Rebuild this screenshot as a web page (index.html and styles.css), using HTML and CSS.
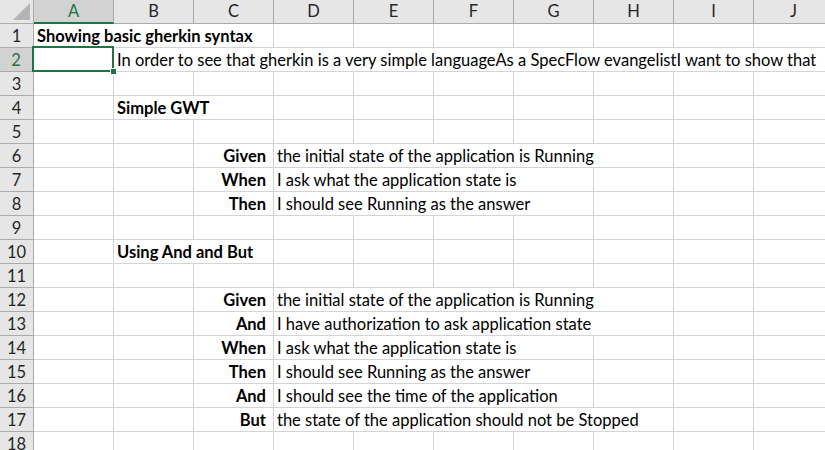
FILE: index.html
```html
<!DOCTYPE html>
<html lang="en">
<head>
  <meta charset="UTF-8">
  <title>Showing basic gherkin syntax</title>
  <link rel="stylesheet" href="styles.css">
</head>
<body>
  <div class="sheet">
    <!-- column headers -->
    <div class="corner"><span class="tri"></span></div>
    <div class="colhead active">A</div>
    <div class="colhead">B</div>
    <div class="colhead">C</div>
    <div class="colhead">D</div>
    <div class="colhead">E</div>
    <div class="colhead">F</div>
    <div class="colhead">G</div>
    <div class="colhead">H</div>
    <div class="colhead">I</div>
    <div class="colhead">J</div>

    <div class="rowhead">1</div>
    <div class="cell span3 bold">Showing basic gherkin syntax</div>
    <div class="cell"></div><div class="cell"></div><div class="cell"></div><div class="cell"></div><div class="cell"></div><div class="cell"></div><div class="cell"></div>

    <div class="rowhead active">2</div>
    <div class="cell selected"><span class="handle"></span></div>
    <div class="cell span9">In order to see that gherkin is a very simple languageAs a SpecFlow evangelistI want to show that</div>

    <div class="rowhead">3</div>
    <div class="cell"></div><div class="cell"></div><div class="cell"></div><div class="cell"></div><div class="cell"></div><div class="cell"></div><div class="cell"></div><div class="cell"></div><div class="cell"></div><div class="cell"></div>

    <div class="rowhead">4</div>
    <div class="cell"></div>
    <div class="cell span2 bold">Simple GWT</div>
    <div class="cell"></div><div class="cell"></div><div class="cell"></div><div class="cell"></div><div class="cell"></div><div class="cell"></div><div class="cell"></div>

    <div class="rowhead">5</div>
    <div class="cell"></div><div class="cell"></div><div class="cell"></div><div class="cell"></div><div class="cell"></div><div class="cell"></div><div class="cell"></div><div class="cell"></div><div class="cell"></div><div class="cell"></div>

    <div class="rowhead">6</div>
    <div class="cell"></div><div class="cell"></div>
    <div class="cell kw">Given</div>
    <div class="cell span5">the initial state of the application is Running</div>
    <div class="cell"></div><div class="cell"></div>

    <div class="rowhead">7</div>
    <div class="cell"></div><div class="cell"></div>
    <div class="cell kw">When</div>
    <div class="cell span4">I ask what the application state is</div>
    <div class="cell"></div><div class="cell"></div><div class="cell"></div>

    <div class="rowhead">8</div>
    <div class="cell"></div><div class="cell"></div>
    <div class="cell kw">Then</div>
    <div class="cell span4">I should see Running as the answer</div>
    <div class="cell"></div><div class="cell"></div><div class="cell"></div>

    <div class="rowhead">9</div>
    <div class="cell"></div><div class="cell"></div><div class="cell"></div><div class="cell"></div><div class="cell"></div><div class="cell"></div><div class="cell"></div><div class="cell"></div><div class="cell"></div><div class="cell"></div>

    <div class="rowhead">10</div>
    <div class="cell"></div>
    <div class="cell span2 bold">Using And and But</div>
    <div class="cell"></div><div class="cell"></div><div class="cell"></div><div class="cell"></div><div class="cell"></div><div class="cell"></div><div class="cell"></div>

    <div class="rowhead">11</div>
    <div class="cell"></div><div class="cell"></div><div class="cell"></div><div class="cell"></div><div class="cell"></div><div class="cell"></div><div class="cell"></div><div class="cell"></div><div class="cell"></div><div class="cell"></div>

    <div class="rowhead">12</div>
    <div class="cell"></div><div class="cell"></div>
    <div class="cell kw">Given</div>
    <div class="cell span5">the initial state of the application is Running</div>
    <div class="cell"></div><div class="cell"></div>

    <div class="rowhead">13</div>
    <div class="cell"></div><div class="cell"></div>
    <div class="cell kw">And</div>
    <div class="cell span5">I have authorization to ask application state</div>
    <div class="cell"></div><div class="cell"></div>

    <div class="rowhead">14</div>
    <div class="cell"></div><div class="cell"></div>
    <div class="cell kw">When</div>
    <div class="cell span4">I ask what the application state is</div>
    <div class="cell"></div><div class="cell"></div><div class="cell"></div>

    <div class="rowhead">15</div>
    <div class="cell"></div><div class="cell"></div>
    <div class="cell kw">Then</div>
    <div class="cell span4">I should see Running as the answer</div>
    <div class="cell"></div><div class="cell"></div><div class="cell"></div>

    <div class="rowhead">16</div>
    <div class="cell"></div><div class="cell"></div>
    <div class="cell kw">And</div>
    <div class="cell span4">I should see the time of the application</div>
    <div class="cell"></div><div class="cell"></div><div class="cell"></div>

    <div class="rowhead">17</div>
    <div class="cell"></div><div class="cell"></div>
    <div class="cell kw">But</div>
    <div class="cell span5">the state of the application should not be Stopped</div>
    <div class="cell"></div><div class="cell"></div>

    <div class="rowhead">18</div>
    <div class="cell"></div><div class="cell"></div><div class="cell"></div><div class="cell"></div><div class="cell"></div><div class="cell"></div><div class="cell"></div><div class="cell"></div><div class="cell"></div><div class="cell"></div>
  </div>
</body>
</html>
```

FILE: styles.css
```css
body {
  margin: 0;
  overflow: hidden;
  background: #fff;
  font-family: Lato, "Liberation Sans", sans-serif;
  font-size: 16.5px;
  color: #000;
}
.sheet {
  display: grid;
  grid-template-columns: 34px repeat(10, 80px);
  grid-auto-rows: 24px;
  width: 834px;
}
.corner {
  position: relative;
  background: #e6e6e6;
  border-right: 1px solid #ababab;
  border-bottom: 1px solid #ababab;
}
.tri {
  position: absolute;
  right: 3px;
  bottom: 3px;
  width: 0;
  height: 0;
  border-left: 17px solid transparent;
  border-bottom: 17px solid #b4b4b4;
}
.colhead {
  background: #e6e6e6;
  border-right: 1px solid #ababab;
  border-bottom: 1px solid #ababab;
  color: #262626;
  text-align: center;
  line-height: 23px;
}
.colhead.active {
  background: #d2d2d2;
  color: #217346;
  border-bottom: 2px solid #217346;
  line-height: 22px;
}
.rowhead {
  background: #e6e6e6;
  border-right: 1px solid #ababab;
  border-bottom: 1px solid #ababab;
  color: #262626;
  text-align: center;
  line-height: 24px;
}
.rowhead.active {
  background: #d2d2d2;
  color: #217346;
  border-right: 2px solid #217346;
}
.cell {
  border-right: 1px solid #d4d4d4;
  border-bottom: 1px solid #d4d4d4;
  padding: 0 3px;
  line-height: 24px;
  white-space: nowrap;
  overflow: hidden;
}
.bold {
  font-weight: bold;
}
.kw {
  font-weight: bold;
  text-align: right;
  padding-right: 7px;
}
.span2 { grid-column: span 2; }
.span3 { grid-column: span 3; }
.span4 { grid-column: span 4; }
.span5 { grid-column: span 5; }
.span9 { grid-column: span 9; }
.selected {
  position: relative;
  overflow: visible;
}
.selected::after {
  content: "";
  position: absolute;
  left: -2px;
  top: -2px;
  right: -1px;
  bottom: -1px;
  border: 2px solid #217346;
}
.handle {
  position: absolute;
  right: -4px;
  bottom: -4px;
  width: 5px;
  height: 5px;
  background: #217346;
  border: 1px solid #fff;
  z-index: 2;
}
```
